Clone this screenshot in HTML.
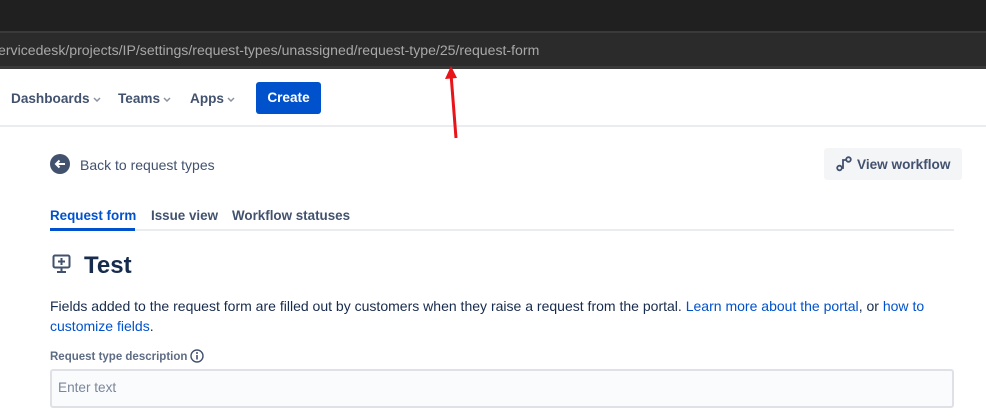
<!DOCTYPE html>
<html><head><style>
*{margin:0;padding:0;box-sizing:border-box}
body{width:986px;height:418px;overflow:hidden;background:#fff;font-family:"Liberation Sans",sans-serif;position:relative;color:#172b4d}
.top{position:absolute;left:0;top:0;width:986px;height:31px;background:#202020}
.addr{position:absolute;left:0;top:31px;width:986px;height:38px;background:#2b2b2b;border-top:2px solid #3a3a3a;border-bottom:3px solid #3a3a3a}
.addr span{position:absolute;left:-2px;top:9px;font-size:14.1px;color:#a8a8a8}
.nav{position:absolute;top:69px;left:0;width:986px;height:58px;border-bottom:2px solid #ebecf0}
.ni{position:absolute;top:22px;font-size:13.6px;font-weight:bold;color:#42526e}
.ni svg{margin-left:3px;vertical-align:1px}
.create{position:absolute;left:256px;top:13px;width:65px;height:32px;background:#0052cc;border-radius:3px;color:#fff;font-weight:bold;font-size:13.6px;text-align:center;line-height:32px}
.a{position:absolute}
.tab{position:absolute;top:208px;font-size:13.4px;font-weight:bold;color:#42526e}
</style></head><body>
<div class="top"></div>
<div class="addr"><span>ervicedesk/projects/IP/settings/request-types/unassigned/request-type/25/request-form</span></div>
<div class="nav">
<div class="ni" style="left:11px">Dashboards<svg width="8" height="5"><path d="M1 1l3 3 3-3" stroke="#8993a4" stroke-width="1.5" fill="none"/></svg></div>
<div class="ni" style="left:118px">Teams<svg width="8" height="5"><path d="M1 1l3 3 3-3" stroke="#8993a4" stroke-width="1.5" fill="none"/></svg></div>
<div class="ni" style="left:190px">Apps<svg width="8" height="5"><path d="M1 1l3 3 3-3" stroke="#8993a4" stroke-width="1.5" fill="none"/></svg></div>
<div class="create">Create</div>
</div>
<svg class="a" style="left:440px;top:62px" width="24" height="80"><line x1="16" y1="76" x2="11" y2="12" stroke="#e8141a" stroke-width="3"/><polygon points="11,4 5,17 17,16" fill="#e8141a"/></svg>
<svg class="a" style="left:50px;top:154px" width="20" height="20"><circle cx="10" cy="10" r="10" fill="#42526e"/><path d="M15 10H6M9.5 6.5L6 10l3.5 3.5" stroke="#fff" stroke-width="2" fill="none"/></svg>
<div class="a" style="left:80px;top:157px;font-size:14px;color:#42526e">Back to request types</div>
<div class="a" style="left:824px;top:148px;width:138px;height:32px;background:#f4f5f7;border-radius:3px"></div>
<svg class="a" style="left:836px;top:156px" width="16" height="16"><circle cx="3.5" cy="12" r="2.3" fill="none" stroke="#42526e" stroke-width="1.8"/><circle cx="12.5" cy="3.5" r="2.3" fill="none" stroke="#42526e" stroke-width="1.8"/><path d="M5.5 12H7V4h3.5" stroke="#42526e" stroke-width="1.8" fill="none"/></svg>
<div class="a" style="left:857px;top:157px;font-size:13.6px;font-weight:bold;color:#42526e">View workflow</div>
<div class="tab" style="left:50px;color:#0052cc">Request form</div>
<div class="tab" style="left:151px">Issue view</div>
<div class="tab" style="left:232px">Workflow statuses</div>
<div class="a" style="left:50px;top:229px;width:904px;height:2px;background:#ebecf0"></div>
<div class="a" style="left:50px;top:228px;width:85px;height:3px;background:#0052cc"></div>
<svg class="a" style="left:52px;top:254px" width="20" height="20"><rect x="1.5" y="1.5" width="16" height="12" rx="1.5" fill="none" stroke="#42526e" stroke-width="2"/><path d="M9.5 4v7M6 7.5h7M9.5 14v3M5 18h9" stroke="#42526e" stroke-width="2"/></svg>
<div class="a" style="left:84px;top:252px;font-size:24px;font-weight:bold;color:#172b4d">Test</div>
<div class="a" style="left:50px;top:296px;width:900px;font-size:14.02px;line-height:20px;color:#172b4d">Fields added to the request form are filled out by customers when they raise a request from the portal. <span style="color:#0052cc">Learn more about the portal</span>, or <span style="color:#0052cc">how to customize fields</span>.</div>
<div class="a" style="left:50px;top:351px;font-size:11.5px;font-weight:bold;color:#5e6c84">Request type description</div>
<svg class="a" style="left:190px;top:349px" width="15" height="15"><circle cx="7" cy="7" r="6" fill="none" stroke="#42526e" stroke-width="1.4"/><path d="M7 6v4.5" stroke="#42526e" stroke-width="1.6"/><circle cx="7" cy="4" r="1" fill="#42526e"/></svg>
<div class="a" style="left:50px;top:369px;width:904px;height:39px;background:#fafbfc;border:2px solid #dfe1e6;border-radius:3px"></div>
<div class="a" style="left:58px;top:380px;font-size:13.6px;color:#7a869a">Enter text</div>
</body></html>
